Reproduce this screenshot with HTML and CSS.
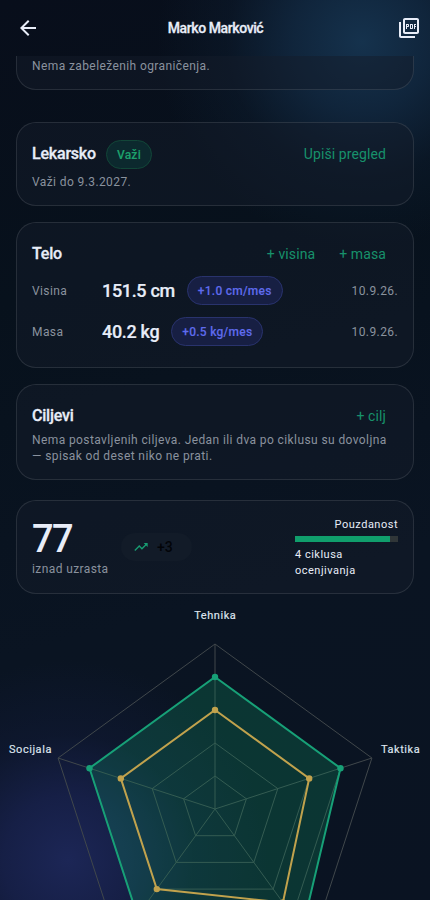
FILE: index.html
```html
<!DOCTYPE html>
<html lang="sr-Latn">
<head>
<meta charset="utf-8">
<meta name="viewport" content="width=device-width, initial-scale=1">
<title>Marko Marković</title>
<link rel="stylesheet" href="styles.css">
</head>
<body>
<header class="bar">
  <svg class="back" viewBox="0 0 24 24"><path d="M20 11H7.830l5.590-5.590L12 4l-8 8 8 8 1.410-1.410L7.830 13H20v-2z"/></svg>
  <h1 class="name">Marko Marković</h1>
  <svg class="pdf" viewBox="0 0 24 24"><path d="M20 2H8c-1.100 0-2 .9-2 2v12c0 1.100.9 2 2 2h12c1.100 0 2-.9 2-2V4c0-1.100-.9-2-2-2zm0 14H8V4h12v12zM4 6H2v14c0 1.100.9 2 2 2h14v-2H4V6zm12 6V9c0-.55-.45-1-1-1h-2v5h2c.55 0 1-.45 1-1zm-2-3h1v3h-1V9zm4 2h1v-1h-1V9h1V8h-2v5h1zm-8 0h1c.55 0 1-.45 1-1V9c0-.55-.45-1-1-1H9v5h1v-2zm0-2h1v1h-1V9z"/></svg>
</header>
<main class="content">
  <section class="card limits"><p class="note">Nema zabeleženih ograničenja.</p></section>
  <section class="card medical">
    <div class="head"><h2 class="title">Lekarsko</h2><span class="chip ok">Važi</span><a class="action">Upiši pregled</a></div>
    <p class="note">Važi do 9.3.2027.</p>
  </section>
  <section class="card physique">
    <div class="head"><h2 class="title">Telo</h2><a class="action">+ visina</a><a class="action">+ masa</a></div>
    <div class="measure"><span class="label">Visina</span><strong class="value">151.5 cm</strong><span class="chip rate">+1.0 cm/mes</span><span class="date">10.9.26.</span></div>
    <div class="measure"><span class="label">Masa</span><strong class="value">40.2 kg</strong><span class="chip rate">+0.5 kg/mes</span><span class="date">10.9.26.</span></div>
  </section>
  <section class="card goals">
    <div class="head"><h2 class="title">Ciljevi</h2><a class="action">+ cilj</a></div>
    <p class="note">Nema postavljenih ciljeva. Jedan ili dva po ciklusu su dovoljna — spisak od deset niko ne prati.</p>
  </section>
  <section class="card score">
    <div class="total"><span class="number">77</span><span class="note">iznad uzrasta</span></div>
    <div class="trend"><svg class="arrow" viewBox="0 0 24 24"><path d="M16 6l2.290 2.290-4.880 4.880-4-4L2 16.590 3.410 18l6-6 4 4 6.300-6.290L22 12V6z"/></svg><span>+3</span></div>
    <div class="trust"><span class="trust-title">Pouzdanost</span><div class="track"><div class="fill"></div></div><span class="cycles">4 ciklusa ocenjivanja</span></div>
  </section>
  <svg class="radar" viewBox="0 594 430 370">
    <g class="grid">
      <path d="M215 644L371.900 758 312 942.500 118 942.500 58.100 758Z"/>
      <path d="M215 677L340.500 768.200 292.600 915.800 137.400 915.800 89.500 768.200Z"/>
      <path d="M215 710L309.200 778.400 273.200 889.100 156.800 889.100 120.800 778.400Z"/>
      <path d="M215 743L277.800 788.600 253.800 862.400 176.200 862.400 152.200 788.600Z"/>
      <path d="M215 776L246.400 798.800 234.400 835.700 195.600 835.700 183.600 798.800Z"/>
      <path d="M215 809V644M215 809L371.900 758M215 809L312 942.500M215 809L118 942.500M215 809L58.100 758"/>
    </g>
    <path class="current" d="M215 677L340.500 768.200 302.300 929.100 137.400 915.800 89.500 768.200Z"/>
    <g class="current-dots"><circle cx="215" cy="677" r="3.200"/><circle cx="340.500" cy="768.200" r="3.200"/><circle cx="89.500" cy="768.200" r="3.200"/></g>
    <path class="norm" d="M215 710L309.200 778.400 282.900 902.500 156.800 889.100 120.800 778.400Z"/>
    <g class="norm-dots"><circle cx="215" cy="710" r="3.200"/><circle cx="309.200" cy="778.400" r="3.200"/><circle cx="282.900" cy="902.500" r="3.200"/><circle cx="156.800" cy="889.100" r="3.200"/><circle cx="120.800" cy="778.400" r="3.200"/></g>
    <text class="axis" x="215.250" y="618.600" text-anchor="middle">Tehnika</text>
    <text class="axis" x="381" y="752.800">Taktika</text>
    <text class="axis" x="9" y="752.800">Socijala</text>
  </svg>
</main>
</body>
</html>
```

FILE: styles.css
```css
* { box-sizing: border-box; }
html, body { height: 100%; }
body {
  margin: 0;
  height: 900px;
  overflow: hidden;
  display: flex;
  flex-direction: column;
  font-family: Roboto, "Liberation Sans", sans-serif;
  font-size: 12px;
  line-height: 16px;
  letter-spacing: .4px;
  color: #e8edf8;
  background:
    radial-gradient(circle at 362px 42px, #15324d 0, rgba(18, 42, 67, .8) 70px, rgba(14, 32, 52, .38) 135px, rgba(8, 17, 28, 0) 205px),
    radial-gradient(circle at 68px 860px, #1c2656 0, rgba(25, 34, 79, .8) 65px, rgba(19, 28, 62, .4) 125px, rgba(10, 18, 35, 0) 200px),
    linear-gradient(165deg, #080e1b 0%, #07111c 30%, #0a1422 65%, #0a1322 100%);
}
h1, h2, p { margin: 0; }
.bar {
  height: 56px;
  flex: none;
  display: flex;
  align-items: center;
  justify-content: space-between;
  padding: 0 9px 0 16px;
}
.bar svg { width: 24px; height: 24px; fill: #e8edf8; }
.name {
  font-size: 14px;
  font-weight: 500;
  line-height: 17px;
  padding-top: 1px;
  letter-spacing: -.4px;
  margin-right: 6px;
  -webkit-text-stroke: .3px;
}
.content {
  flex: 1;
  min-height: 0;
  overflow: hidden;
  padding: 0 16px;
}
.card {
  border: 1px solid rgba(255, 255, 255, .105);
  border-radius: 20px;
  background: rgba(19, 27, 42, .5);
  padding: 0 15px;
}
.limits { height: 54px; margin-top: -20px; padding-top: 21px; }
.medical { height: 84px; margin-top: 32px; padding-top: 16px; }
.physique { height: 146px; margin-top: 16px; padding-top: 16px; }
.goals { height: 96px; margin-top: 16px; padding-top: 16px; }
.note, .label, .date { color: #8a929e; }
.note { letter-spacing: .4px; }
.head { display: flex; align-items: center; height: 30px; padding-right: 12px; }
.title {
  font-size: 16px;
  font-weight: 500;
  line-height: 24px;
  letter-spacing: -.2px;
  margin-right: auto;
  -webkit-text-stroke: .3px;
}
.action { color: #17916b; font-size: 14px; line-height: 20px; letter-spacing: .1px; }
.action + .action { margin-left: 24px; }
.chip {
  height: 29px;
  border: 1px solid;
  border-radius: 15px;
  padding: 1px 10px 0;
  font-weight: 500;
  line-height: 27px;
  letter-spacing: .25px;
  -webkit-text-stroke: .1px;
}
.medical .title { margin-right: 10px; }
.medical .action { margin-left: auto; }
.medical .note { margin-top: 5px; }
.ok { color: #1da16c; background: #0c292e; border-color: #124638; }
.rate { color: #5f6bec; background: #171f43; border-color: #29336d; }
.measure { display: flex; align-items: center; height: 29px; margin-top: 7px; }
.measure + .measure { margin-top: 12px; }
.label { width: 70px; }
.value { font-size: 18px; font-weight: 500; line-height: 22px; padding-top: 1px; letter-spacing: -.33px; margin-right: 12px; -webkit-text-stroke: .2px; }
.date { margin-left: auto; }
.goals .note { margin-top: 1px; }
.score { height: 94px; margin-top: 20px; display: flex; padding-top: 16px; }
.total { width: 89px; display: flex; flex-direction: column; }
.number { font-size: 38px; font-weight: 500; line-height: 45px; letter-spacing: -1.7px; height: 44px; }
.trend {
  display: flex;
  align-items: center;
  width: 71px;
  height: 28px;
  margin-top: 16px;
  padding-left: 12px;
  border-radius: 14px;
  background: #121b28;
  color: #020408;
  font-size: 14px;
  font-weight: 500;
  letter-spacing: 0;
}
.arrow { width: 16px; height: 16px; margin-right: 8px; fill: #189d72; }
.trust { width: 103px; margin-left: auto; font-size: 11px; letter-spacing: .5px; }
.trust-title { display: block; line-height: 15px; text-align: right; }
.track { height: 6px; margin: 4px 0 5px; background: #303638; }
.cycles { display: block; }
.fill { width: 92.5%; height: 100%; background: #109e6c; }
.radar { display: block; width: 430px; height: 370px; margin: 0 -16px; }
.grid { fill: none; stroke: #40474b; stroke-width: 1; }
.current { fill: rgba(16, 155, 105, .25); stroke: #17a077; stroke-width: 2; }
.current-dots { fill: #17a077; }
.norm { fill: none; stroke: #c1a24d; stroke-width: 2; }
.norm-dots { fill: #c1a24d; }
.axis { font-size: 11px; font-weight: 400; letter-spacing: .55px; fill: #dfe5ef; stroke: #dfe5ef; stroke-width: .15px; }
```
